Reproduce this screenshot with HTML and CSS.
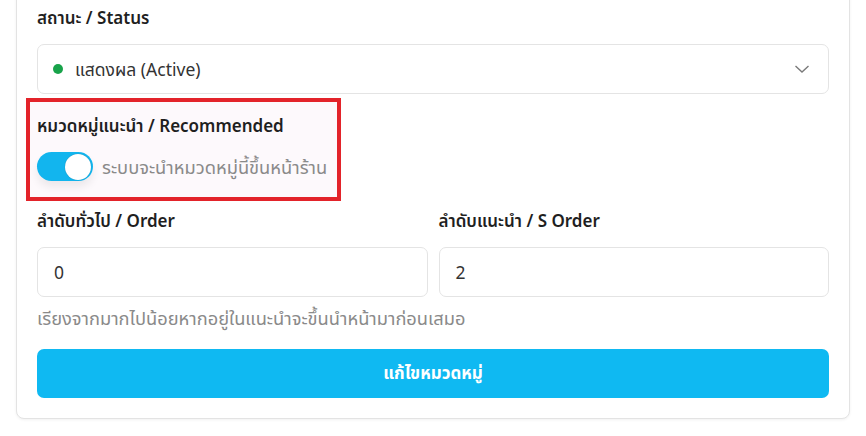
FILE: index.html
```html
<!DOCTYPE html>
<html lang="th">
<head>
<meta charset="utf-8">
<title>แก้ไขหมวดหมู่</title>
<link rel="stylesheet" href="styles.css">
</head>
<body>
<div class="card">
  <div class="field">
    <label class="label">สถานะ / Status</label>
    <div class="select">
      <span class="dot"></span>
      <span class="select-text">แสดงผล (Active)</span>
      <svg class="chevron" width="16" height="10" viewBox="0 0 16 10"><path d="M1.5 2 L8 8 L14.5 2" fill="none" stroke="#7a7a7a" stroke-width="1.4"/></svg>
    </div>
  </div>
  <div class="highlight">
    <div class="label">หมวดหมู่แนะนำ / Recommended</div>
    <div class="toggle-row">
      <span class="toggle"><span class="knob"></span></span>
      <span class="toggle-text">ระบบจะนำหมวดหมู่นี้ขึ้นหน้าร้าน</span>
    </div>
  </div>
  <div class="grid">
    <div class="col">
      <div class="label">ลำดับทั่วไป / Order</div>
      <div class="input">0</div>
    </div>
    <div class="col">
      <div class="label">ลำดับแนะนำ / S Order</div>
      <div class="input">2</div>
    </div>
  </div>
  <p class="help">เรียงจากมากไปน้อยหากอยู่ในแนะนำจะขึ้นนำหน้ามาก่อนเสมอ</p>
  <button class="btn">แก้ไขหมวดหมู่</button>
</div>
</body>
</html>
```
FILE: styles.css
```css
* { box-sizing: border-box; }
html, body { margin: 0; padding: 0; background: #fff; }
body {
  font-family: "Noto Sans", "Noto Sans Thai", "Noto Sans Thai UI", sans-serif;
  color: #222;
  font-size: 18.3px;
  overflow: hidden;
  height: 436px;
}
.card {
  margin: -40px 16px 0 16px;
  width: 834px;
  border: 1px solid #e3e3e3;
  border-radius: 8px;
  box-shadow: 0 1px 3px rgba(0,0,0,0.06);
  padding: 45px 20px 20px 20px;
  background: #fff;
}
.label {
  display: block;
  font-size: 17px;
  font-weight: 600;
  line-height: 24px;
  color: #1f1f1f;
}
.field .label { margin-bottom: 14px; }
.select {
  height: 50px;
  border: 1px solid #e4e4e4;
  border-radius: 7px;
  display: flex;
  align-items: center;
  padding: 0 16px 0 15px;
}
.dot {
  width: 10px; height: 10px; border-radius: 50%;
  background: #18a34a;
  margin-right: 12px;
}
.select-text { flex: 1; color: #333; line-height: 24px; font-size: 17.5px; }
.chevron { margin-right: 2px; }
.highlight {
  margin: 4px 0 0 -11px;
  width: 315px;
  border: 4px solid #e3232a;
  background: #fdf9fc;
  padding: 12px 7px 16px 7px;
}
.toggle-row {
  display: flex;
  align-items: center;
  margin-top: 14px;
}
.toggle {
  width: 56px; height: 29px;
  border-radius: 15px;
  background: #12b5ee;
  display: flex;
  align-items: center;
  justify-content: flex-end;
  padding: 0 2px;
  box-shadow: 0 6px 8px rgba(0,0,0,0.07);
}
.knob {
  width: 26px; height: 26px; border-radius: 50%;
  background: #fff;
  box-shadow: 0 0 1px rgba(0,0,0,0.3);
}
.toggle-text { margin-left: 9px; color: #8a8a8a; line-height: 24px; }
.grid {
  display: grid;
  grid-template-columns: 1fr 1fr;
  gap: 11px;
  margin-top: 8px;
}
.col .label { margin-bottom: 14px; }
.input {
  height: 50px;
  border: 1px solid #e4e4e4;
  border-radius: 7px;
  display: flex;
  align-items: center;
  padding: 0 16px;
  color: #333;
  font-size: 17.5px;
}
.help {
  margin: 9px 0 0 0;
  line-height: 24px;
  color: #8a8a8a;
}
.btn {
  display: block;
  width: 100%;
  height: 49px;
  margin-top: 19px;
  border: 0;
  border-radius: 7px;
  background: #0fb9f2;
  color: #fff;
  font-family: inherit;
  font-size: 17px;
  font-weight: 700;
}
```
